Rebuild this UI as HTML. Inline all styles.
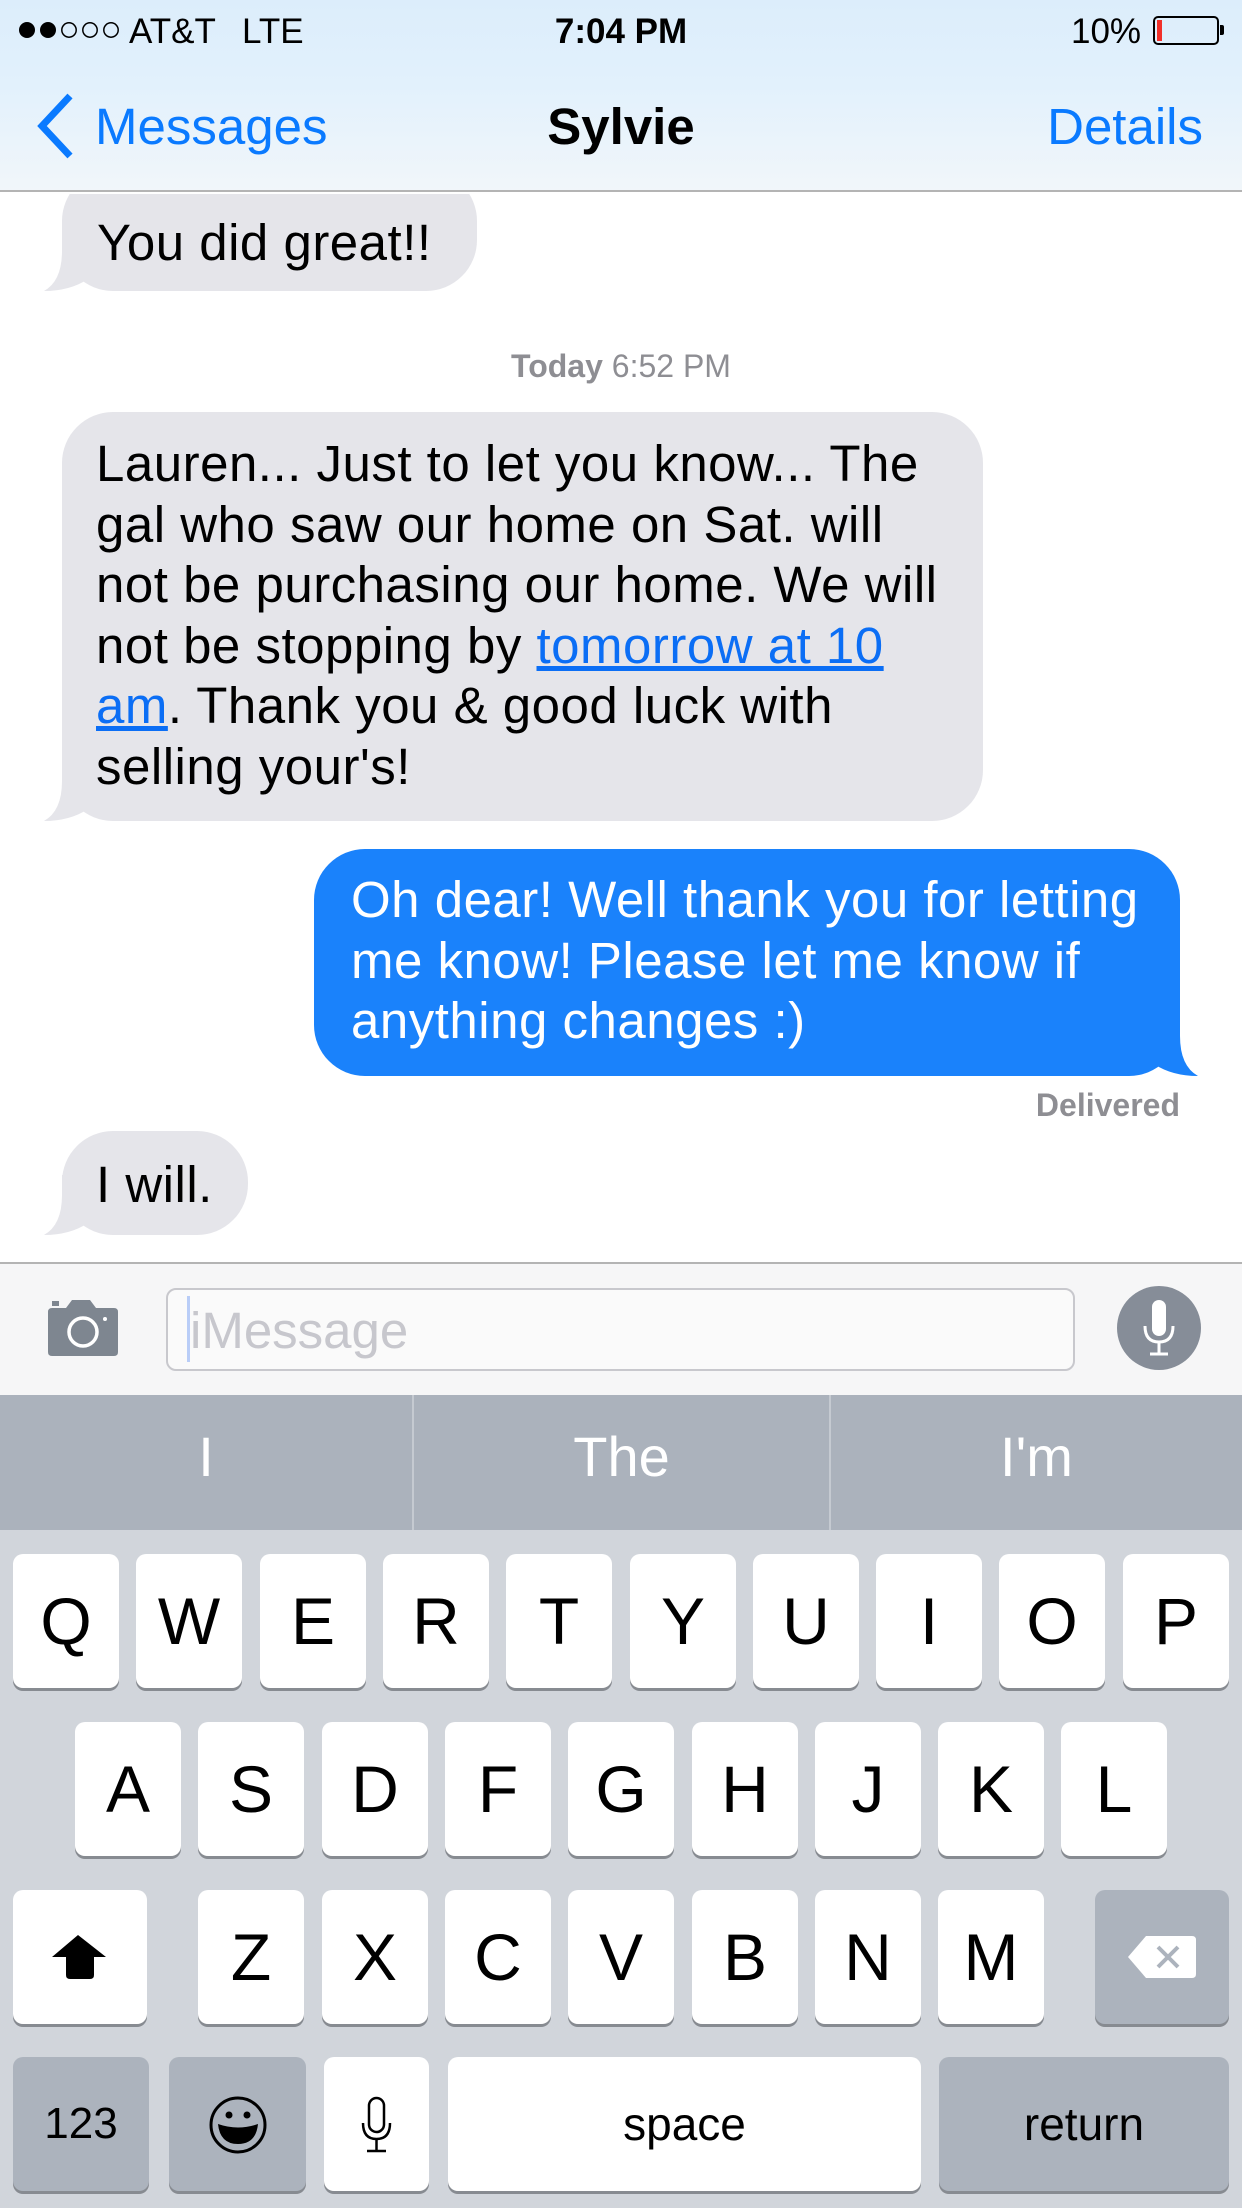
<!DOCTYPE html>
<html><head><meta charset="utf-8">
<style>
*{margin:0;padding:0;box-sizing:border-box}
body{width:1242px;height:2208px;position:relative;overflow:hidden;background:#fff;font-family:"Liberation Sans",Helvetica,Arial,sans-serif;}
.abs{position:absolute}
.hdr{left:0;top:0;width:1242px;height:192px;background:linear-gradient(180deg,#dcedfb 0%,#e2f1fc 45%,#f1f6fa 100%);border-bottom:2px solid #b4b4b4}
.st{font-size:35px;color:#000;top:10px;line-height:44px}
.nav{font-size:51px;line-height:60px;top:97px}
.bub{position:absolute;border-radius:51px;font-size:51px;line-height:60.5px;white-space:nowrap;letter-spacing:0.5px}
.in{background:#e5e5ea;color:#000}
.out{background:#1a82fb;color:#fff}
.key{position:absolute;width:106px;height:134px;background:#fff;border-radius:10px;box-shadow:0 3px 0 #878b91;font-size:66px;line-height:134px;text-align:center;color:#000}
.sp{background:#acb3bd}
</style></head><body>

<div class="abs hdr"></div>
<svg class="abs" style="left:18px;top:20px" width="105" height="20">
<circle cx="9" cy="10" r="8" fill="#000"/><circle cx="30" cy="10" r="8" fill="#000"/>
<circle cx="51" cy="10" r="7.2" fill="none" stroke="#000" stroke-width="1.5"/>
<circle cx="72" cy="10" r="7.2" fill="none" stroke="#000" stroke-width="1.5"/>
<circle cx="93" cy="10" r="7.2" fill="none" stroke="#000" stroke-width="1.5"/>
</svg>
<div class="abs st" style="left:129px">AT&amp;T</div>
<div class="abs st" style="left:242px">LTE</div>
<div class="abs st" style="left:0;width:1242px;text-align:center;font-weight:bold">7:04 PM</div>
<div class="abs st" style="left:1071px">10%</div>
<div class="abs" style="left:1153px;top:16px;width:66px;height:29px;border:2px solid #000;border-radius:5px"></div>
<div class="abs" style="left:1157px;top:20px;width:5px;height:21px;background:#f1302a"></div>
<div class="abs" style="left:1220px;top:25px;width:4px;height:10px;background:#000;border-radius:0 2px 2px 0"></div>

<svg class="abs" style="left:34px;top:92px" width="46" height="68"><path d="M36 4 L8 34 L36 64" fill="none" stroke="#0a7aff" stroke-width="7" stroke-linecap="butt"/></svg>
<div class="abs nav" style="left:95px;color:#0a7aff">Messages</div>
<div class="abs nav" style="left:0;width:1242px;text-align:center;font-weight:bold">Sylvie</div>
<div class="abs nav" style="right:39px;color:#0a7aff">Details</div>

<div class="abs" style="left:0;top:194px;width:1242px;height:1069px;overflow:hidden">
 <div style="position:relative;top:-194px">
  <div class="bub in" style="left:62px;top:170px;width:415px;height:121px;padding:43px 0 0 35px">You did great!!</div>
  <svg class="abs" style="left:40px;top:231px" width="60" height="62"><path d="M22 0 L22 20 Q22 50 4 60 Q30 60 48 48 L48 0 Z" fill="#e5e5ea"/></svg>
 </div>
</div>

<div class="abs" style="left:0;width:1242px;top:344px;text-align:center;font-size:32px;color:#8e8e93;line-height:44px"><b>Today</b> 6:52 PM</div>

<div class="bub in" style="left:62px;top:412px;width:921px;height:409px;padding:22px 0 0 34px">Lauren... Just to let you know... The<br>gal who saw our home on Sat. will<br>not be purchasing our home. We will<br>not be stopping by <span style="color:#0b6ef5;text-decoration:underline">tomorrow at 10</span><br><span style="color:#0b6ef5;text-decoration:underline">am</span>. Thank you &amp; good luck with<br>selling your's!</div>
<svg class="abs" style="left:40px;top:761px" width="60" height="62"><path d="M22 0 L22 20 Q22 50 4 60 Q30 60 48 48 L48 0 Z" fill="#e5e5ea"/></svg>

<div class="bub out" style="left:314px;top:849px;width:866px;height:227px;padding:21px 0 0 37px">Oh dear! Well thank you for letting<br>me know! Please let me know if<br>anything changes :)</div>
<svg class="abs" style="left:1142px;top:1016px" width="60" height="62"><path d="M38 0 L38 20 Q38 50 56 60 Q30 60 12 48 L12 0 Z" fill="#1a82fb"/></svg>

<div class="abs" style="right:62px;top:1085px;font-size:32px;line-height:40px;color:#8e8e93;font-weight:bold">Delivered</div>

<div class="bub in" style="left:62px;top:1131px;width:186px;height:104px;padding:24px 0 0 34px">I will.</div>
<svg class="abs" style="left:40px;top:1175px" width="60" height="62"><path d="M22 0 L22 20 Q22 50 4 60 Q30 60 48 48 L48 0 Z" fill="#e5e5ea"/></svg>

<div class="abs" style="left:0;top:1262px;width:1242px;height:133px;background:#f6f6f7;border-top:2px solid #b4b4b4"></div>
<svg class="abs" style="left:44px;top:1298px" width="78" height="60">
<path d="M4 14 Q4 10 8 10 L22 10 L28 2 L46 2 L52 10 L70 10 Q74 10 74 14 L74 54 Q74 58 70 58 L8 58 Q4 58 4 54 Z" fill="#7e8690"/>
<rect x="8" y="3" width="7" height="5" fill="#7e8690"/>
<circle cx="39" cy="34" r="14" fill="none" stroke="#fff" stroke-width="3.5"/>
<circle cx="61" cy="21" r="2" fill="#fff"/>
</svg>
<div class="abs" style="left:166px;top:1288px;width:909px;height:83px;border:2px solid #c8c8cd;border-radius:10px;background:#fafafa"></div>
<div class="abs" style="left:187px;top:1296px;width:3px;height:66px;background:#b9cdf7"></div>
<div class="abs" style="left:190px;top:1300px;font-size:51px;line-height:62px;color:#c7c7cd">iMessage</div>
<div class="abs" style="left:1117px;top:1286px;width:84px;height:84px;border-radius:50%;background:#868d98"></div>
<svg class="abs" style="left:1117px;top:1286px" width="84" height="84">
<rect x="35" y="14" width="14" height="36" rx="7" fill="#fff"/>
<path d="M28 40 Q28 56 42 56 Q56 56 56 40" fill="none" stroke="#fff" stroke-width="3"/>
<path d="M42 56 L42 67 M33 68 L51 68" stroke="#fff" stroke-width="3"/>
</svg>

<div class="abs" style="left:0;top:1395px;width:1242px;height:135px;background:#abb2bc"></div>
<div class="abs" style="left:412px;top:1395px;width:2px;height:135px;background:#c5cad1"></div>
<div class="abs" style="left:829px;top:1395px;width:2px;height:135px;background:#c5cad1"></div>
<div class="abs" style="left:0;top:1425px;width:412px;text-align:center;color:#fff;font-size:56px;line-height:64px">I</div>
<div class="abs" style="left:414px;top:1425px;width:415px;text-align:center;color:#fff;font-size:56px;line-height:64px">The</div>
<div class="abs" style="left:831px;top:1425px;width:411px;text-align:center;color:#fff;font-size:56px;line-height:64px">I'm</div>

<div class="abs" style="left:0;top:1530px;width:1242px;height:678px;background:#d1d5db"></div>

<div class="key" style="left:13px;top:1554px">Q</div>
<div class="key" style="left:136px;top:1554px">W</div>
<div class="key" style="left:260px;top:1554px">E</div>
<div class="key" style="left:383px;top:1554px">R</div>
<div class="key" style="left:506px;top:1554px">T</div>
<div class="key" style="left:630px;top:1554px">Y</div>
<div class="key" style="left:753px;top:1554px">U</div>
<div class="key" style="left:876px;top:1554px">I</div>
<div class="key" style="left:999px;top:1554px">O</div>
<div class="key" style="left:1123px;top:1554px">P</div>

<div class="key" style="left:75px;top:1722px">A</div>
<div class="key" style="left:198px;top:1722px">S</div>
<div class="key" style="left:322px;top:1722px">D</div>
<div class="key" style="left:445px;top:1722px">F</div>
<div class="key" style="left:568px;top:1722px">G</div>
<div class="key" style="left:692px;top:1722px">H</div>
<div class="key" style="left:815px;top:1722px">J</div>
<div class="key" style="left:938px;top:1722px">K</div>
<div class="key" style="left:1061px;top:1722px">L</div>

<div class="key" style="left:13px;top:1890px;width:134px"></div>
<svg class="abs" style="left:50px;top:1933px" width="60" height="48"><path d="M28 2 L56 24 L44 24 L44 42 Q44 46 40 46 L20 46 Q16 46 16 42 L16 24 L2 24 Z" fill="#000"/></svg>
<div class="key" style="left:198px;top:1890px">Z</div>
<div class="key" style="left:322px;top:1890px">X</div>
<div class="key" style="left:445px;top:1890px">C</div>
<div class="key" style="left:568px;top:1890px">V</div>
<div class="key" style="left:692px;top:1890px">B</div>
<div class="key" style="left:815px;top:1890px">N</div>
<div class="key" style="left:938px;top:1890px">M</div>
<div class="key sp" style="left:1095px;top:1890px;width:134px"></div>
<svg class="abs" style="left:1126px;top:1934px" width="72" height="46"><path d="M20 2 L66 2 Q70 2 70 6 L70 40 Q70 44 66 44 L20 44 L2 23 Z" fill="#fff"/><path d="M32 13 L52 33 M52 13 L32 33" stroke="#acb3bd" stroke-width="4"/></svg>

<div class="key sp" style="left:13px;top:2057px;width:136px;font-size:44px">123</div>
<div class="key sp" style="left:169px;top:2057px;width:137px"></div>
<svg class="abs" style="left:207px;top:2095px" width="62" height="60"><circle cx="31" cy="30" r="27" fill="none" stroke="#000" stroke-width="3"/><circle cx="22" cy="20" r="3.5" fill="#000"/><circle cx="40" cy="20" r="3.5" fill="#000"/><path d="M11 29 Q31 36 51 29 Q49 49 31 49 Q13 49 11 29 Z" fill="#000"/></svg>
<div class="key" style="left:324px;top:2057px;width:105px"></div>
<svg class="abs" style="left:356px;top:2095px" width="42" height="60"><rect x="13" y="3" width="15" height="34" rx="7.5" fill="none" stroke="#000" stroke-width="2.5"/><path d="M7 28 Q7 44 20.5 44 Q34 44 34 28" fill="none" stroke="#000" stroke-width="2.5"/><path d="M20.5 44 L20.5 55 M11 56 L30 56" stroke="#000" stroke-width="2.5"/></svg>
<div class="key" style="left:448px;top:2057px;width:473px;font-size:46px">space</div>
<div class="key sp" style="left:939px;top:2057px;width:290px;font-size:46px">return</div>

</body></html>
